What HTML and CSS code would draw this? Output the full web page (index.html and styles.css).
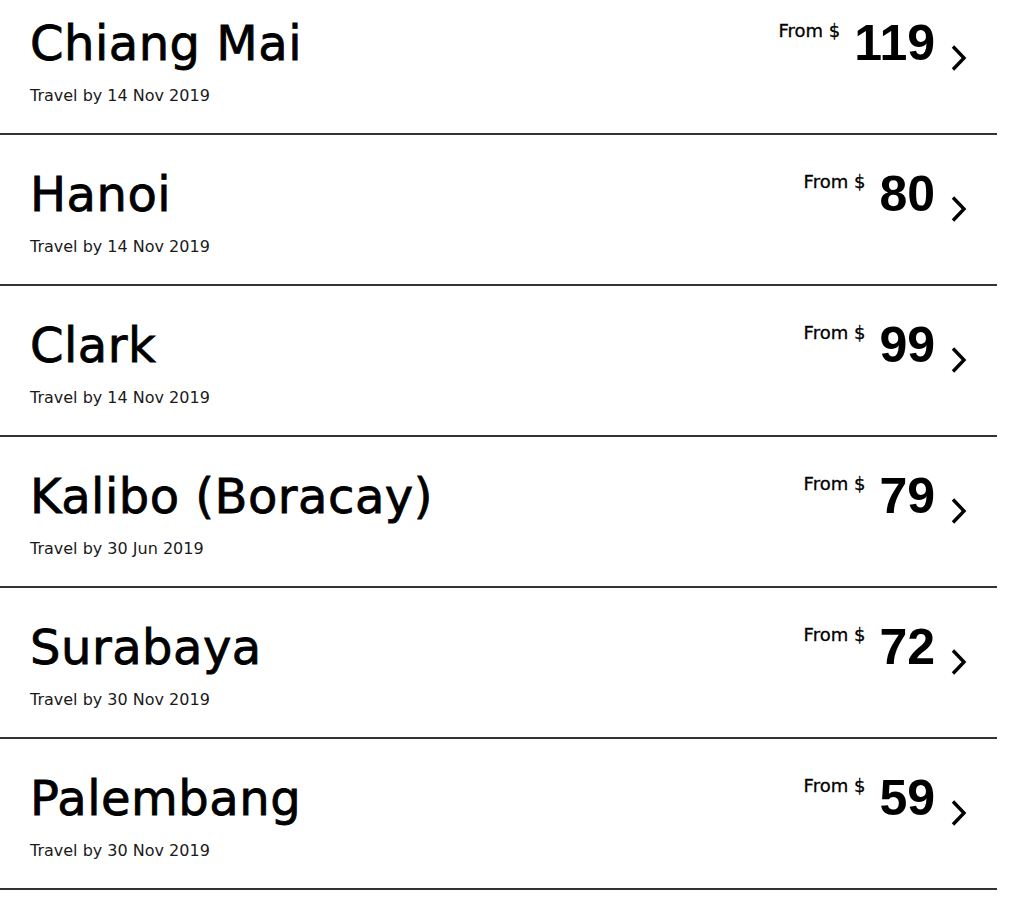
FILE: index.html
```html
<!DOCTYPE html>
<html lang="en">
<head>
<meta charset="utf-8">
<title>Deals</title>
<link rel="stylesheet" href="styles.css">
</head>
<body>
<ul class="deals">
  <li class="deal">
    <div class="deal-info">
      <h2 class="deal-city">Chiang Mai</h2>
      <p class="deal-date">Travel by 14 Nov 2019</p>
    </div>
    <div class="deal-price">
      <span class="deal-from">From $</span>
      <span class="deal-amount">119</span>
      <svg class="deal-chevron" width="16" height="26" viewBox="0 0 16 26"><polyline points="2,1.5 13,13 2,24.5"/></svg>
    </div>
  </li>
  <li class="deal">
    <div class="deal-info">
      <h2 class="deal-city">Hanoi</h2>
      <p class="deal-date">Travel by 14 Nov 2019</p>
    </div>
    <div class="deal-price">
      <span class="deal-from">From $</span>
      <span class="deal-amount">80</span>
      <svg class="deal-chevron" width="16" height="26" viewBox="0 0 16 26"><polyline points="2,1.5 13,13 2,24.5"/></svg>
    </div>
  </li>
  <li class="deal">
    <div class="deal-info">
      <h2 class="deal-city">Clark</h2>
      <p class="deal-date">Travel by 14 Nov 2019</p>
    </div>
    <div class="deal-price">
      <span class="deal-from">From $</span>
      <span class="deal-amount">99</span>
      <svg class="deal-chevron" width="16" height="26" viewBox="0 0 16 26"><polyline points="2,1.5 13,13 2,24.5"/></svg>
    </div>
  </li>
  <li class="deal">
    <div class="deal-info">
      <h2 class="deal-city">Kalibo (Boracay)</h2>
      <p class="deal-date">Travel by 30 Jun 2019</p>
    </div>
    <div class="deal-price">
      <span class="deal-from">From $</span>
      <span class="deal-amount">79</span>
      <svg class="deal-chevron" width="16" height="26" viewBox="0 0 16 26"><polyline points="2,1.5 13,13 2,24.5"/></svg>
    </div>
  </li>
  <li class="deal">
    <div class="deal-info">
      <h2 class="deal-city">Surabaya</h2>
      <p class="deal-date">Travel by 30 Nov 2019</p>
    </div>
    <div class="deal-price">
      <span class="deal-from">From $</span>
      <span class="deal-amount">72</span>
      <svg class="deal-chevron" width="16" height="26" viewBox="0 0 16 26"><polyline points="2,1.5 13,13 2,24.5"/></svg>
    </div>
  </li>
  <li class="deal">
    <div class="deal-info">
      <h2 class="deal-city">Palembang</h2>
      <p class="deal-date">Travel by 30 Nov 2019</p>
    </div>
    <div class="deal-price">
      <span class="deal-from">From $</span>
      <span class="deal-amount">59</span>
      <svg class="deal-chevron" width="16" height="26" viewBox="0 0 16 26"><polyline points="2,1.5 13,13 2,24.5"/></svg>
    </div>
  </li>
</ul>
</body>
</html>
```

FILE: styles.css
```css
html, body {
  margin: 0;
  padding: 0;
  background: #ffffff;
  color: #000000;
  font-family: "DejaVu Sans", "Liberation Sans", sans-serif;
}

.deals {
  list-style: none;
  margin: 0 27px 0 0;
  padding: 0;
}

.deal {
  display: flex;
  justify-content: space-between;
  align-items: flex-start;
  padding: 31px 30px 27px 30px;
  border-bottom: 2px solid #333333;
}

.deal:first-child {
  padding-top: 15px;
}

.deal-city {
  margin: 0;
  font-size: 48px;
  line-height: 56px;
  font-weight: normal;
  letter-spacing: 0.5px;
  color: #000000;
  -webkit-text-stroke: 0.8px #000000;
}

.deal-date {
  margin: 15px 0 0;
  font-size: 16px;
  line-height: 20px;
  color: #1a1a1a;
}

.deal-price {
  display: flex;
  align-items: flex-start;
}

.deal-from {
  margin-top: 6px;
  margin-right: 14px;
  font-size: 18px;
  line-height: 20px;
  color: #000000;
  -webkit-text-stroke: 0.3px #000000;
}

.deal-amount {
  font-family: "Liberation Sans", Arial, sans-serif;
  font-weight: bold;
  font-size: 50px;
  line-height: 56px;
  color: #000000;
}

.deal-chevron {
  margin-top: 30px;
  margin-left: 16px;
  fill: none;
  stroke: #000000;
  stroke-width: 3.4;
  stroke-linejoin: miter;
}
```
